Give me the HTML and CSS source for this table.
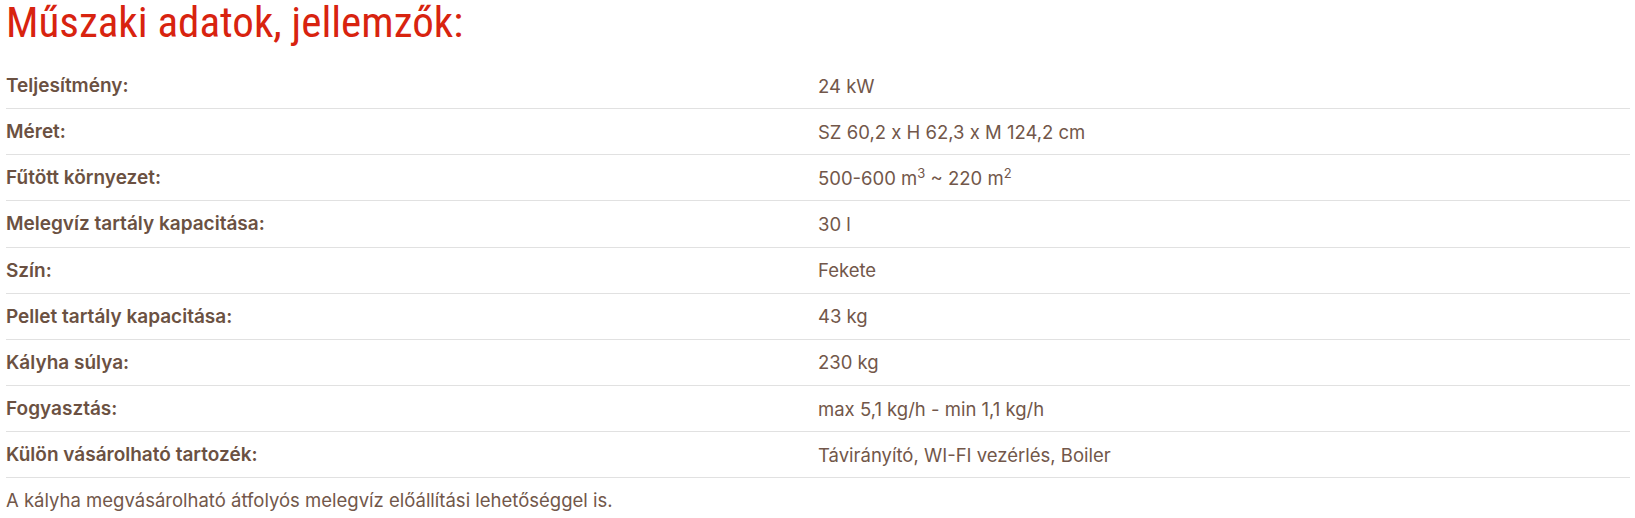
FILE: index.html
```html
<!DOCTYPE html>
<html lang="hu">
<head>
<meta charset="utf-8">
<title>Műszaki adatok</title>
<link rel="stylesheet" href="styles.css">
</head>
<body>
<section class="specs">
  <h2 class="specs-title">Műszaki adatok, jellemzők:</h2>
  <table class="specs-table">
    <tbody>
      <tr><th>Teljesítmény:</th><td>24 kW</td></tr>
      <tr><th>Méret:</th><td>SZ 60,2 x H 62,3 x M 124,2 cm</td></tr>
      <tr><th>Fűtött környezet:</th><td>500-600 m<sup>3</sup> ~ 220 m<sup>2</sup></td></tr>
      <tr><th>Melegvíz tartály kapacitása:</th><td>30 l</td></tr>
      <tr><th>Szín:</th><td>Fekete</td></tr>
      <tr><th>Pellet tartály kapacitása:</th><td>43 kg</td></tr>
      <tr><th>Kályha súlya:</th><td>230 kg</td></tr>
      <tr><th>Fogyasztás:</th><td>max 5,1 kg/h - min 1,1 kg/h</td></tr>
      <tr><th>Külön vásárolható tartozék:</th><td>Távirányító, WI-FI vezérlés, Boiler</td></tr>
    </tbody>
  </table>
  <p class="specs-note">A kályha megvásárolható átfolyós melegvíz előállítási lehetőséggel is.</p>
</section>
</body>
</html>
```
FILE: styles.css
```css
html, body {
  margin: 0;
  padding: 0;
  background: #ffffff;
}
.specs {
  padding: 0 5px 0 6px;
  font-family: Inter, "Liberation Sans", sans-serif;
  color: #72574a;
}
.specs-title {
  margin: 0;
  height: 63px;
  font-family: "Roboto Condensed", "Liberation Sans Narrow", "DejaVu Sans Condensed", Roboto, sans-serif;
  font-stretch: condensed;
  font-weight: 400;
  font-size: 43px;
  line-height: 45px;
  color: #d8230f;
}
.specs-table {
  width: 100%;
  border-collapse: collapse;
  table-layout: fixed;
}
.specs-table tr {
  border-bottom: 1px solid #e1e1e1;
}
.specs-table th,
.specs-table td {
  height: 45.15px;
  padding: 0;
  vertical-align: middle;
  text-align: left;
}
.specs-table th {
  width: 50%;
  font-size: 19px;
  font-weight: 600;
  color: #6b5142;
}
.specs-table td {
  font-size: 18.5px;
  font-weight: 400;
  font-feature-settings: "pnum" 1;
}
.specs-table sup {
  font-size: 13px;
  line-height: 0;
}
.specs-note {
  margin: 0;
  padding-top: 10px;
  font-size: 18.5px;
  line-height: 24px;
}
```
